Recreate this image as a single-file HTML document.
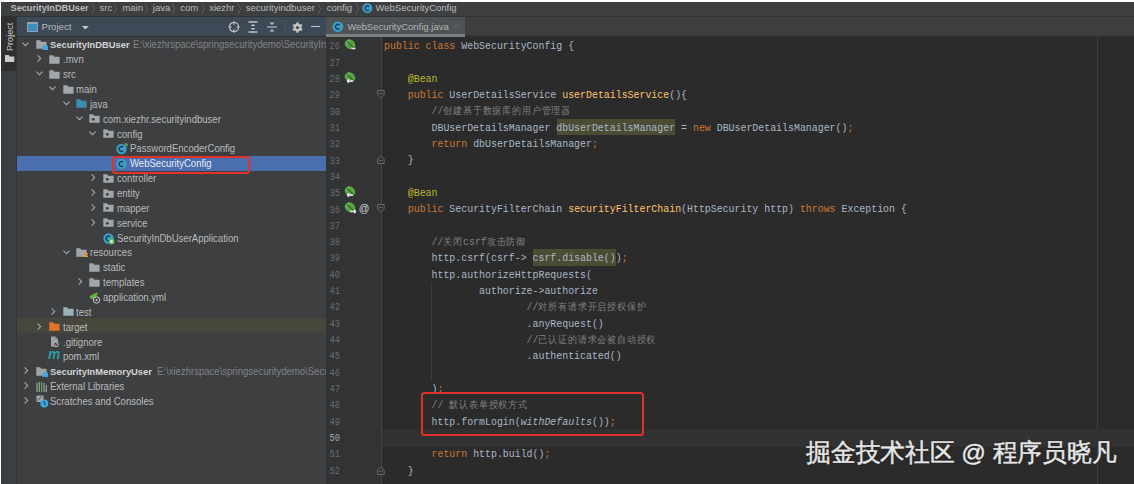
<!DOCTYPE html><html><head><meta charset="utf-8"><style>
*{margin:0;padding:0;box-sizing:border-box}
html,body{width:1134px;height:484px;overflow:hidden;background:#fff}
body{position:relative;font-family:"Liberation Sans",sans-serif}
.a{position:absolute}
.t{position:absolute;white-space:pre;font-size:9.5px;color:#bbbbbb;line-height:14px}
.tr{font-size:10px;transform-origin:0 50%;transform:scaleX(0.955)}
.code{position:absolute;white-space:pre;font-family:"Liberation Mono",monospace;font-size:11px;line-height:16px;color:#a9b7c6;transform-origin:0 0;transform:scaleX(0.9)}
.ln{position:absolute;white-space:pre;font-family:"Liberation Mono",monospace;font-size:10.4px;line-height:16px;color:#5c5f61;text-align:right;width:30px;transform-origin:100% 0;transform:scaleX(0.84)}
.kw{color:#cc7832}.fn{color:#ffc66d}.an{color:#bbb529}.cm{color:#808080}.it{font-style:italic}
.cj{font-size:10.2px;letter-spacing:0.9px}
</style></head><body>
<div class="a" style="left:1px;top:2px;width:1133px;height:14px;background:#3d3f41"></div>
<div class="a" style="left:1px;top:15.5px;width:1133px;height:1px;background:#2e3032"></div>
<div class="t" style="left:10.5px;top:0.5px;font-weight:bold;font-size:9.2px;color:#bbbbbb">SecurityInDBUser</div>
<div class="t" style="left:99.6px;top:0.5px;color:#bbbbbb">src</div>
<div class="t" style="left:122.4px;top:0.5px;color:#bbbbbb">main</div>
<div class="t" style="left:152.8px;top:0.5px;color:#bbbbbb">java</div>
<div class="t" style="left:180.3px;top:0.5px;color:#bbbbbb">com</div>
<div class="t" style="left:209.2px;top:0.5px;color:#bbbbbb">xiezhr</div>
<div class="t" style="left:245.7px;top:0.5px;color:#bbbbbb">securityindbuser</div>
<div class="t" style="left:326.8px;top:0.5px;color:#bbbbbb">config</div>
<div class="t" style="left:375.5px;top:0.5px;color:#bbbbbb">WebSecurityConfig</div>
<svg class="a" style="left:90.8px;top:3px" width="5" height="12"><path d="M1 0.5 L3.6 5.8 L1 11.2" stroke="#5f6265" stroke-width="0.9" fill="none"/></svg>
<svg class="a" style="left:113.4px;top:3px" width="5" height="12"><path d="M1 0.5 L3.6 5.8 L1 11.2" stroke="#5f6265" stroke-width="0.9" fill="none"/></svg>
<svg class="a" style="left:144.4px;top:3px" width="5" height="12"><path d="M1 0.5 L3.6 5.8 L1 11.2" stroke="#5f6265" stroke-width="0.9" fill="none"/></svg>
<svg class="a" style="left:171.2px;top:3px" width="5" height="12"><path d="M1 0.5 L3.6 5.8 L1 11.2" stroke="#5f6265" stroke-width="0.9" fill="none"/></svg>
<svg class="a" style="left:200.8px;top:3px" width="5" height="12"><path d="M1 0.5 L3.6 5.8 L1 11.2" stroke="#5f6265" stroke-width="0.9" fill="none"/></svg>
<svg class="a" style="left:236.8px;top:3px" width="5" height="12"><path d="M1 0.5 L3.6 5.8 L1 11.2" stroke="#5f6265" stroke-width="0.9" fill="none"/></svg>
<svg class="a" style="left:317px;top:3px" width="5" height="12"><path d="M1 0.5 L3.6 5.8 L1 11.2" stroke="#5f6265" stroke-width="0.9" fill="none"/></svg>
<svg class="a" style="left:354.6px;top:3px" width="5" height="12"><path d="M1 0.5 L3.6 5.8 L1 11.2" stroke="#5f6265" stroke-width="0.9" fill="none"/></svg>
<svg class="a" style="left:361.5px;top:3px" width="11" height="11"><circle cx="5.3" cy="5.3" r="5" fill="#3d9ec6"/><path d="M7 3.7A2.3 2.3 0 1 0 7 6.9" stroke="#173f5a" stroke-width="1.3" fill="none"/></svg>
<div class="a" style="left:1px;top:16px;width:15.5px;height:468px;background:#3c3f41"></div>
<div class="a" style="left:1px;top:16px;width:15.5px;height:55px;background:#2d2f31"></div>
<div class="a" style="left:16px;top:16px;width:1px;height:468px;background:#323436"></div>
<div class="a" style="left:3.6px;top:51.2px;transform-origin:0 0;transform:rotate(-90deg);font-size:9.1px;color:#c8c8c8;white-space:pre;line-height:12px">Project</div>
<svg class="a" style="left:5px;top:55.2px" width="10" height="8"><path d="M0 0 H3.8 L4.8 1.5 H9.3 V7 H0Z" fill="#c8c8c8"/></svg>
<div class="a" style="left:17px;top:16px;width:309px;height:468px;background:#3d3f41"></div>
<div class="a" style="left:17px;top:16px;width:309px;height:21px;background:#3e4957;border-top:1px solid #2f3337;border-bottom:1.3px solid #2e3236"></div>
<div class="a" style="left:26.8px;top:21.8px;width:11px;height:10px;border:1.1px solid #8fa2b1;border-top-width:2px;background:#3b8dbd"></div>
<div class="t" style="left:41.5px;top:19.5px;font-size:9.6px;color:#bbbbbb">Project</div>
<svg class="a" style="left:82.3px;top:25.8px" width="7" height="4"><path d="M0 0 H6.8 L3.4 3.5Z" fill="#c8c8c8"/></svg>
<svg class="a" style="left:228px;top:21px" width="12" height="12"><circle cx="6" cy="6" r="4.6" stroke="#c4c4c4" stroke-width="1.2" fill="none"/><path d="M6 0.6V3.8M6 8.2V11.4M0.6 6H3.8M8.2 6H11.4" stroke="#c4c4c4" stroke-width="1.2"/></svg>
<svg class="a" style="left:248px;top:21px" width="10" height="12"><path d="M0.5 1H9.5M0.5 11H9.5" stroke="#c4c4c4" stroke-width="1.3"/><path d="M2.5 5L5 3L7.5 5ZM2.5 7L5 9L7.5 7Z" fill="#c4c4c4"/></svg>
<svg class="a" style="left:267px;top:21px" width="10" height="12"><path d="M0 6H10" stroke="#c4c4c4" stroke-width="1.1"/><path d="M2.5 1.5L5 4L7.5 1.5ZM2.5 10.5L5 8L7.5 10.5Z" fill="#c4c4c4"/></svg>
<div class="a" style="left:285px;top:20px;width:1px;height:13px;background:#4a5562"></div>
<svg class="a" style="left:291.5px;top:21.5px" width="11" height="11"><g fill="#c4c4c4"><circle cx="5.5" cy="5.5" r="3.8"/><rect x="4.3" y="0.3" width="2.4" height="10.4" rx="0.6"/><rect x="4.3" y="0.3" width="2.4" height="10.4" rx="0.6" transform="rotate(60 5.5 5.5)"/><rect x="4.3" y="0.3" width="2.4" height="10.4" rx="0.6" transform="rotate(-60 5.5 5.5)"/></g><circle cx="5.5" cy="5.5" r="1.6" fill="#3e4957"/></svg>
<div class="a" style="left:311px;top:26px;width:9px;height:1.4px;background:#c4c4c4"></div>
<div class="a" style="left:17px;top:318.21px;width:309px;height:15px;background:#47463b"></div>
<div class="a" style="left:17px;top:155.70px;width:309.5px;height:14.9px;background:#4b6eaf"></div>
<svg class="a" style="left:22.4px;top:41.6px" width="7" height="5"><path d="M0.4 0.6L3.5 3.7L6.6 0.6" stroke="#a5a8aa" stroke-width="1.1" fill="none"/></svg>
<svg class="a" style="left:35.8px;top:40.0px" width="12" height="10"><path d="M0.3 0.3H4.2L5.2 1.7H10.6V8.8H0.3Z" fill="#a3a6a8"/><rect x="6.5" y="5.5" width="5.5" height="4.5" fill="#3fa7e0"/></svg>
<div class="t tr" style="left:49.5px;top:38.49px;font-weight:bold;font-size:9.8px;color:#d4d4d4">SecurityInDBUser</div>
<div class="t tr" style="left:132.6px;top:38.49px;color:#808386">E:\xiezhrspace\springsecuritydemo\SecurityInDBUser</div>
<svg class="a" style="left:37.3px;top:55.1px" width="5" height="7"><path d="M0.6 0.4L3.7 3.5L0.6 6.6" stroke="#a5a8aa" stroke-width="1.1" fill="none"/></svg>
<svg class="a" style="left:49.2px;top:54.8px" width="12" height="10"><path d="M0.3 0.3H4.2L5.2 1.7H10.6V8.8H0.3Z" fill="#a3a6a8"/></svg>
<div class="t tr" style="left:62.9px;top:53.35px;color:#bbbbbb">.mvn</div>
<svg class="a" style="left:35.8px;top:71.4px" width="7" height="5"><path d="M0.4 0.6L3.5 3.7L6.6 0.6" stroke="#a5a8aa" stroke-width="1.1" fill="none"/></svg>
<svg class="a" style="left:49.2px;top:69.7px" width="12" height="10"><path d="M0.3 0.3H4.2L5.2 1.7H10.6V8.8H0.3Z" fill="#a3a6a8"/></svg>
<div class="t tr" style="left:62.9px;top:68.20px;color:#bbbbbb">src</div>
<svg class="a" style="left:49.2px;top:86.2px" width="7" height="5"><path d="M0.4 0.6L3.5 3.7L6.6 0.6" stroke="#a5a8aa" stroke-width="1.1" fill="none"/></svg>
<svg class="a" style="left:62.6px;top:84.5px" width="12" height="10"><path d="M0.3 0.3H4.2L5.2 1.7H10.6V8.8H0.3Z" fill="#a3a6a8"/></svg>
<div class="t tr" style="left:76.3px;top:83.06px;color:#bbbbbb">main</div>
<svg class="a" style="left:62.6px;top:101.1px" width="7" height="5"><path d="M0.4 0.6L3.5 3.7L6.6 0.6" stroke="#a5a8aa" stroke-width="1.1" fill="none"/></svg>
<svg class="a" style="left:76.0px;top:99.4px" width="12" height="10"><path d="M0.3 0.3H4.2L5.2 1.7H10.6V8.8H0.3Z" fill="#3a8fb0"/></svg>
<div class="t tr" style="left:89.7px;top:97.91px;color:#bbbbbb">java</div>
<svg class="a" style="left:76.0px;top:115.9px" width="7" height="5"><path d="M0.4 0.6L3.5 3.7L6.6 0.6" stroke="#a5a8aa" stroke-width="1.1" fill="none"/></svg>
<svg class="a" style="left:89.4px;top:114.2px" width="12" height="10"><path d="M0.3 0.3H4.2L5.2 1.7H10.6V8.8H0.3Z" fill="#a3a6a8"/><circle cx="4.3" cy="5.3" r="1.4" fill="#3c3f41"/></svg>
<div class="t tr" style="left:103.1px;top:112.77px;color:#bbbbbb">com.xiezhr.securityindbuser</div>
<svg class="a" style="left:89.4px;top:130.8px" width="7" height="5"><path d="M0.4 0.6L3.5 3.7L6.6 0.6" stroke="#a5a8aa" stroke-width="1.1" fill="none"/></svg>
<svg class="a" style="left:102.8px;top:129.1px" width="12" height="10"><path d="M0.3 0.3H4.2L5.2 1.7H10.6V8.8H0.3Z" fill="#a3a6a8"/><circle cx="4.3" cy="5.3" r="1.4" fill="#3c3f41"/></svg>
<div class="t tr" style="left:116.5px;top:127.63px;color:#bbbbbb">config</div>
<svg class="a" style="left:116.2px;top:143.3px" width="12" height="12"><circle cx="5.5" cy="6" r="5.2" fill="#3d9ec6"/><path d="M7.3 4.3A2.4 2.4 0 1 0 7.3 7.7" stroke="#173f5a" stroke-width="1.4" fill="none"/><path d="M8 0.5 L11.5 0.5 L11.5 4Z" fill="#5fb85a"/></svg>
<div class="t tr" style="left:129.9px;top:142.48px;color:#bbbbbb">PasswordEncoderConfig</div>
<svg class="a" style="left:116.2px;top:158.2px" width="12" height="12"><circle cx="5.5" cy="6" r="5.2" fill="#3d9ec6"/><path d="M7.3 4.3A2.4 2.4 0 1 0 7.3 7.7" stroke="#173f5a" stroke-width="1.4" fill="none"/></svg>
<div class="t tr" style="left:129.9px;top:157.34px;color:#e4eaf4">WebSecurityConfig</div>
<svg class="a" style="left:90.9px;top:174.0px" width="5" height="7"><path d="M0.6 0.4L3.7 3.5L0.6 6.6" stroke="#a5a8aa" stroke-width="1.1" fill="none"/></svg>
<svg class="a" style="left:102.8px;top:173.7px" width="12" height="10"><path d="M0.3 0.3H4.2L5.2 1.7H10.6V8.8H0.3Z" fill="#a3a6a8"/><circle cx="4.3" cy="5.3" r="1.4" fill="#3c3f41"/></svg>
<div class="t tr" style="left:116.5px;top:172.19px;color:#bbbbbb">controller</div>
<svg class="a" style="left:90.9px;top:188.8px" width="5" height="7"><path d="M0.6 0.4L3.7 3.5L0.6 6.6" stroke="#a5a8aa" stroke-width="1.1" fill="none"/></svg>
<svg class="a" style="left:102.8px;top:188.5px" width="12" height="10"><path d="M0.3 0.3H4.2L5.2 1.7H10.6V8.8H0.3Z" fill="#a3a6a8"/><circle cx="4.3" cy="5.3" r="1.4" fill="#3c3f41"/></svg>
<div class="t tr" style="left:116.5px;top:187.05px;color:#bbbbbb">entity</div>
<svg class="a" style="left:90.9px;top:203.7px" width="5" height="7"><path d="M0.6 0.4L3.7 3.5L0.6 6.6" stroke="#a5a8aa" stroke-width="1.1" fill="none"/></svg>
<svg class="a" style="left:102.8px;top:203.4px" width="12" height="10"><path d="M0.3 0.3H4.2L5.2 1.7H10.6V8.8H0.3Z" fill="#a3a6a8"/><circle cx="4.3" cy="5.3" r="1.4" fill="#3c3f41"/></svg>
<div class="t tr" style="left:116.5px;top:201.91px;color:#bbbbbb">mapper</div>
<svg class="a" style="left:90.9px;top:218.5px" width="5" height="7"><path d="M0.6 0.4L3.7 3.5L0.6 6.6" stroke="#a5a8aa" stroke-width="1.1" fill="none"/></svg>
<svg class="a" style="left:102.8px;top:218.2px" width="12" height="10"><path d="M0.3 0.3H4.2L5.2 1.7H10.6V8.8H0.3Z" fill="#a3a6a8"/><circle cx="4.3" cy="5.3" r="1.4" fill="#3c3f41"/></svg>
<div class="t tr" style="left:116.5px;top:216.76px;color:#bbbbbb">service</div>
<svg class="a" style="left:102.8px;top:232.5px" width="12" height="12"><circle cx="5.5" cy="5.5" r="5.2" fill="#3d9ec6"/><path d="M7.3 3.8A2.4 2.4 0 1 0 7.3 7.2" stroke="#173f5a" stroke-width="1.4" fill="none"/><circle cx="8.5" cy="8.5" r="3" fill="#5fb85a"/><circle cx="8.5" cy="8.5" r="1.4" fill="#e8e8e8"/></svg>
<div class="t tr" style="left:116.5px;top:231.62px;color:#bbbbbb">SecurityInDbUserApplication</div>
<svg class="a" style="left:62.6px;top:249.6px" width="7" height="5"><path d="M0.4 0.6L3.5 3.7L6.6 0.6" stroke="#a5a8aa" stroke-width="1.1" fill="none"/></svg>
<svg class="a" style="left:76.0px;top:247.9px" width="12" height="10"><path d="M0.3 0.3H4.2L5.2 1.7H10.6V8.8H0.3Z" fill="#a3a6a8"/><rect x="7" y="5" width="5" height="1.5" fill="#d9a13b"/><rect x="7" y="7.5" width="5" height="1.5" fill="#d9a13b"/></svg>
<div class="t tr" style="left:89.7px;top:246.47px;color:#bbbbbb">resources</div>
<svg class="a" style="left:89.4px;top:262.8px" width="12" height="10"><path d="M0.3 0.3H4.2L5.2 1.7H10.6V8.8H0.3Z" fill="#a3a6a8"/></svg>
<div class="t tr" style="left:103.1px;top:261.33px;color:#bbbbbb">static</div>
<svg class="a" style="left:77.5px;top:277.9px" width="5" height="7"><path d="M0.6 0.4L3.7 3.5L0.6 6.6" stroke="#a5a8aa" stroke-width="1.1" fill="none"/></svg>
<svg class="a" style="left:89.4px;top:277.6px" width="12" height="10"><path d="M0.3 0.3H4.2L5.2 1.7H10.6V8.8H0.3Z" fill="#a3a6a8"/></svg>
<div class="t tr" style="left:103.1px;top:276.19px;color:#bbbbbb">templates</div>
<svg class="a" style="left:89.4px;top:291.9px" width="12" height="12"><path d="M0.5 5 Q3 2 9 0.5 Q8 6 2 7Z" fill="#62b543"/><circle cx="7.5" cy="8" r="3.2" fill="#3c3f41" stroke="#d0d0d0" stroke-width="1"/><circle cx="7.5" cy="8" r="1" fill="#d0d0d0"/></svg>
<div class="t tr" style="left:103.1px;top:291.04px;color:#bbbbbb">application.yml</div>
<svg class="a" style="left:50.7px;top:307.7px" width="5" height="7"><path d="M0.6 0.4L3.7 3.5L0.6 6.6" stroke="#a5a8aa" stroke-width="1.1" fill="none"/></svg>
<svg class="a" style="left:62.6px;top:307.4px" width="12" height="10"><path d="M0.3 0.3H4.2L5.2 1.7H10.6V8.8H0.3Z" fill="#9cb0b8"/></svg>
<div class="t tr" style="left:76.3px;top:305.90px;color:#bbbbbb">test</div>
<svg class="a" style="left:37.3px;top:322.5px" width="5" height="7"><path d="M0.6 0.4L3.7 3.5L0.6 6.6" stroke="#a5a8aa" stroke-width="1.1" fill="none"/></svg>
<svg class="a" style="left:49.2px;top:322.2px" width="12" height="10"><path d="M0.3 0.3H4.2L5.2 1.7H10.6V8.8H0.3Z" fill="#e0702a"/></svg>
<div class="t tr" style="left:62.9px;top:320.75px;color:#bbbbbb">target</div>
<svg class="a" style="left:49.7px;top:335.5px" width="11" height="12"><path d="M1 0.5H5.5L8 3V10.5H1Z" fill="#a0a3a5"/><path d="M5.5 0.5V3H8" fill="#6d7072"/><circle cx="6" cy="8.3" r="2.4" fill="#3c3f41" stroke="#c4c4c4" stroke-width="0.9"/><path d="M4.5 9.8L7.5 6.8" stroke="#c4c4c4" stroke-width="0.8"/></svg>
<div class="t tr" style="left:62.9px;top:335.61px;color:#bbbbbb">.gitignore</div>
<div class="a" style="left:47.7px;top:346.3px;font-size:15px;font-style:italic;font-weight:bold;color:#3399a6;line-height:16px;transform-origin:0 50%;transform:scaleX(0.92)">m</div>
<div class="t tr" style="left:62.9px;top:350.47px;color:#bbbbbb">pom.xml</div>
<svg class="a" style="left:23.9px;top:367.1px" width="5" height="7"><path d="M0.6 0.4L3.7 3.5L0.6 6.6" stroke="#a5a8aa" stroke-width="1.1" fill="none"/></svg>
<svg class="a" style="left:35.8px;top:366.8px" width="12" height="10"><path d="M0.3 0.3H4.2L5.2 1.7H10.6V8.8H0.3Z" fill="#a3a6a8"/><rect x="6.5" y="5.5" width="5.5" height="4.5" fill="#3fa7e0"/></svg>
<div class="t tr" style="left:49.5px;top:365.32px;font-weight:bold;font-size:9.8px;color:#d4d4d4">SecurityInMemoryUser</div>
<div class="t tr" style="left:157.2px;top:365.32px;color:#808386">E:\xiezhrspace\springsecuritydemo\SecurityInMemoryUser</div>
<svg class="a" style="left:23.9px;top:381.9px" width="5" height="7"><path d="M0.6 0.4L3.7 3.5L0.6 6.6" stroke="#a5a8aa" stroke-width="1.1" fill="none"/></svg>
<svg class="a" style="left:35.8px;top:381.5px" width="12" height="10"><path d="M1 1V10M3.3 0V10M8 1V10M10.3 3V10" stroke="#a9acae" stroke-width="1.1"/><path d="M5.6 0V10" stroke="#62b543" stroke-width="1.1"/></svg>
<div class="t tr" style="left:49.5px;top:380.18px;color:#bbbbbb">External Libraries</div>
<svg class="a" style="left:23.9px;top:396.8px" width="5" height="7"><path d="M0.6 0.4L3.7 3.5L0.6 6.6" stroke="#a5a8aa" stroke-width="1.1" fill="none"/></svg>
<svg class="a" style="left:35.8px;top:394.9px" width="13" height="13"><path d="M0.5 0.5H7.5V7H0.5Z" fill="#a3a6a8"/><path d="M1.5 5.5L5.5 1.5" stroke="#3c3f41" stroke-width="0.9"/><circle cx="8.3" cy="8.5" r="4" fill="#3fa7e0"/><path d="M8.3 6V8.7L10 9.8" stroke="#1e3d50" stroke-width="1" fill="none"/></svg>
<div class="t tr" style="left:49.5px;top:395.03px;color:#bbbbbb">Scratches and Consoles</div>
<div class="a" style="left:111.8px;top:155.8px;width:138.4px;height:18.6px;border:2.9px solid #e2302a;border-radius:3.5px"></div>
<div class="a" style="left:326.5px;top:16px;width:808px;height:20.5px;background:#3d3f41;border-top:1px solid #2f3133"></div>
<div class="a" style="left:326.5px;top:35.2px;width:808px;height:1.4px;background:#323435"></div>
<div class="a" style="left:326px;top:17px;width:139.2px;height:19.8px;background:#4e5254"></div>
<div class="a" style="left:326px;top:33.8px;width:139.2px;height:3px;background:#7b7f81"></div>
<svg class="a" style="left:332px;top:21px" width="12" height="12"><circle cx="5.8" cy="5.8" r="5.4" fill="#3d9ec6"/><path d="M7.6 4.1A2.4 2.4 0 1 0 7.6 7.5" stroke="#173f5a" stroke-width="1.4" fill="none"/></svg>
<div class="t" style="left:347.5px;top:19.7px;color:#b0b2b4">WebSecurityConfig.java</div>
<svg class="a" style="left:452.7px;top:23.3px" width="7" height="6"><path d="M0.5 0.5L6.5 5.5M6.5 0.5L0.5 5.5" stroke="#6a6d6f" stroke-width="0.9"/></svg>
<div class="a" style="left:326px;top:36.5px;width:55.5px;height:448px;background:#313335"></div>
<div class="a" style="left:381.5px;top:36.5px;width:753px;height:448px;background:#2b2b2b"></div>
<div class="a" style="left:380.5px;top:36.5px;width:0.8px;height:448px;background:#414345"></div>
<div class="a" style="left:1097px;top:36.5px;width:1px;height:448px;background:#3d3f41"></div>
<div class="a" style="left:381.5px;top:429.32px;width:753px;height:17.6px;background:#323232"></div>
<div class="a" style="left:556.6px;top:118.75px;width:118.8px;height:16.6px;background:#4a4d33"></div>
<div class="a" style="left:532.8px;top:249.39px;width:83.2px;height:16.6px;background:#4a4d33"></div>
<div class="a" style="left:430.8px;top:282.05px;width:1px;height:97.98px;background:#3b3b3b"></div>
<div class="ln" style="left:310.2px;top:38.20px;color:#6a6d6f">26</div>
<div class="code" style="left:384.3px;top:38.00px"><span class="kw">public class </span>WebSecurityConfig {</div>
<div class="ln" style="left:310.2px;top:54.53px;color:#6a6d6f">27</div>
<div class="ln" style="left:310.2px;top:70.86px;color:#6a6d6f">28</div>
<div class="code" style="left:384.3px;top:70.66px">    <span class="an">@Bean</span></div>
<div class="ln" style="left:310.2px;top:87.19px;color:#6a6d6f">29</div>
<div class="code" style="left:384.3px;top:86.99px">    <span class="kw">public </span>UserDetailsService <span class="fn">userDetailsService</span>(){</div>
<div class="ln" style="left:310.2px;top:103.52px;color:#6a6d6f">30</div>
<div class="code" style="left:384.3px;top:103.32px">        <span class="cm">//<span class="cj">创建基于数据库的用户管理器</span></span></div>
<div class="ln" style="left:310.2px;top:119.85px;color:#6a6d6f">31</div>
<div class="code" style="left:384.3px;top:119.65px">        DBUserDetailsManager dbUserDetailsManager = <span class="kw">new </span>DBUserDetailsManager()<span class="kw">;</span></div>
<div class="ln" style="left:310.2px;top:136.18px;color:#6a6d6f">32</div>
<div class="code" style="left:384.3px;top:135.98px">        <span class="kw">return </span>dbUserDetailsManager<span class="kw">;</span></div>
<div class="ln" style="left:310.2px;top:152.51px;color:#6a6d6f">33</div>
<div class="code" style="left:384.3px;top:152.31px">    }</div>
<div class="ln" style="left:310.2px;top:168.84px;color:#6a6d6f">34</div>
<div class="ln" style="left:310.2px;top:185.17px;color:#6a6d6f">35</div>
<div class="code" style="left:384.3px;top:184.97px">    <span class="an">@Bean</span></div>
<div class="ln" style="left:310.2px;top:201.50px;color:#6a6d6f">36</div>
<div class="code" style="left:384.3px;top:201.30px">    <span class="kw">public </span>SecurityFilterChain <span class="fn">securityFilterChain</span>(HttpSecurity http) <span class="kw">throws </span>Exception {</div>
<div class="ln" style="left:310.2px;top:217.83px;color:#6a6d6f">37</div>
<div class="ln" style="left:310.2px;top:234.16px;color:#6a6d6f">38</div>
<div class="code" style="left:384.3px;top:233.96px">        <span class="cm">//<span class="cj">关闭</span>csrf<span class="cj">攻击防御</span></span></div>
<div class="ln" style="left:310.2px;top:250.49px;color:#6a6d6f">39</div>
<div class="code" style="left:384.3px;top:250.29px">        http.csrf(csrf-> csrf.disable())<span class="kw">;</span></div>
<div class="ln" style="left:310.2px;top:266.82px;color:#6a6d6f">40</div>
<div class="code" style="left:384.3px;top:266.62px">        http.authorizeHttpRequests(</div>
<div class="ln" style="left:310.2px;top:283.15px;color:#6a6d6f">41</div>
<div class="code" style="left:384.3px;top:282.95px">                authorize->authorize</div>
<div class="ln" style="left:310.2px;top:299.48px;color:#6a6d6f">42</div>
<div class="code" style="left:384.3px;top:299.28px">                        <span class="cm">//<span class="cj">对所有请求开启授权保护</span></span></div>
<div class="ln" style="left:310.2px;top:315.81px;color:#6a6d6f">43</div>
<div class="code" style="left:384.3px;top:315.61px">                        .anyRequest()</div>
<div class="ln" style="left:310.2px;top:332.14px;color:#6a6d6f">44</div>
<div class="code" style="left:384.3px;top:331.94px">                        <span class="cm">//<span class="cj">已认证的请求会被自动授权</span></span></div>
<div class="ln" style="left:310.2px;top:348.47px;color:#6a6d6f">45</div>
<div class="code" style="left:384.3px;top:348.27px">                        .authenticated()</div>
<div class="ln" style="left:310.2px;top:364.80px;color:#6a6d6f">46</div>
<div class="ln" style="left:310.2px;top:381.13px;color:#6a6d6f">47</div>
<div class="code" style="left:384.3px;top:380.93px">        )<span class="kw">;</span></div>
<div class="ln" style="left:310.2px;top:397.46px;color:#6a6d6f">48</div>
<div class="code" style="left:384.3px;top:397.26px">        <span class="cm">// <span class="cj">默认表单授权方式</span></span></div>
<div class="ln" style="left:310.2px;top:413.79px;color:#6a6d6f">49</div>
<div class="code" style="left:384.3px;top:413.59px">        http.formLogin(<span class="it">withDefaults</span>())<span class="kw">;</span></div>
<div class="ln" style="left:310.2px;top:430.12px;color:#a8a8a8">50</div>
<div class="ln" style="left:310.2px;top:446.45px;color:#6a6d6f">51</div>
<div class="code" style="left:384.3px;top:446.25px">        <span class="kw">return </span>http.build()<span class="kw">;</span></div>
<div class="ln" style="left:310.2px;top:462.78px;color:#6a6d6f">52</div>
<div class="code" style="left:384.3px;top:462.58px">    }</div>
<svg class="a" style="left:376.8px;top:90.1px" width="8" height="9"><path d="M0.5 0.5H7.2V5L3.85 8.2L0.5 5Z" stroke="#6b6d6f" stroke-width="0.9" fill="#313335"/><path d="M2 3.6H5.7" stroke="#6b6d6f" stroke-width="0.9"/></svg>
<svg class="a" style="left:376.8px;top:155.4px" width="8" height="9"><path d="M0.5 8.5H7.2V4L3.85 0.8L0.5 4Z" stroke="#6b6d6f" stroke-width="0.9" fill="#313335"/><path d="M2 5.4H5.7" stroke="#6b6d6f" stroke-width="0.9"/></svg>
<svg class="a" style="left:376.8px;top:204.4px" width="8" height="9"><path d="M0.5 0.5H7.2V5L3.85 8.2L0.5 5Z" stroke="#6b6d6f" stroke-width="0.9" fill="#313335"/><path d="M2 3.6H5.7" stroke="#6b6d6f" stroke-width="0.9"/></svg>
<svg class="a" style="left:376.8px;top:465.7px" width="8" height="9"><path d="M0.5 8.5H7.2V4L3.85 0.8L0.5 4Z" stroke="#6b6d6f" stroke-width="0.9" fill="#313335"/><path d="M2 5.4H5.7" stroke="#6b6d6f" stroke-width="0.9"/></svg>
<svg class="a" style="left:344px;top:38.1px" width="13" height="13"><ellipse cx="6" cy="6.3" rx="5.6" ry="4.6" fill="#5aa447" transform="rotate(35 6 6.3)"/><path d="M2.3 2.6 L9.6 9.6" stroke="#2a5e22" stroke-width="1.2"/><path d="M2 5.5 Q3.5 3 6 2" stroke="#88c970" stroke-width="0.8" fill="none"/><path d="M7.5 10.5H11.5" stroke="#e8e8e8" stroke-width="1.5"/></svg>
<svg class="a" style="left:344px;top:70.8px" width="13" height="13"><ellipse cx="6" cy="6.3" rx="5.6" ry="4.6" fill="#5aa447" transform="rotate(35 6 6.3)"/><path d="M2.3 2.6 L9.6 9.6" stroke="#2a5e22" stroke-width="1.2"/><path d="M2 5.5 Q3.5 3 6 2" stroke="#88c970" stroke-width="0.8" fill="none"/><path d="M3 10H9M3 10L5 8.3M3 10L5 11.7" stroke="#e8e8e8" stroke-width="1.3" fill="none"/></svg>
<svg class="a" style="left:344px;top:185.1px" width="13" height="13"><ellipse cx="6" cy="6.3" rx="5.6" ry="4.6" fill="#5aa447" transform="rotate(35 6 6.3)"/><path d="M2.3 2.6 L9.6 9.6" stroke="#2a5e22" stroke-width="1.2"/><path d="M2 5.5 Q3.5 3 6 2" stroke="#88c970" stroke-width="0.8" fill="none"/><path d="M3 10H9M3 10L5 8.3M3 10L5 11.7" stroke="#e8e8e8" stroke-width="1.3" fill="none"/></svg>
<svg class="a" style="left:344px;top:201.4px" width="13" height="13"><ellipse cx="6" cy="6.3" rx="5.6" ry="4.6" fill="#5aa447" transform="rotate(35 6 6.3)"/><path d="M2.3 2.6 L9.6 9.6" stroke="#2a5e22" stroke-width="1.2"/><path d="M2 5.5 Q3.5 3 6 2" stroke="#88c970" stroke-width="0.8" fill="none"/><path d="M6 10.5H12M12 10.5L10 8.8M12 10.5L10 12.2" stroke="#e8e8e8" stroke-width="1.3" fill="none"/></svg>
<div class="a" style="left:358.8px;top:201.9px;font-size:10.5px;color:#d8d8d8;line-height:13px">@</div>
<div class="a" style="left:421px;top:391.5px;width:223.2px;height:44.6px;border:2.9px solid #e2302a;border-radius:3.5px"></div>
<div class="a" style="left:806.4px;top:435.6px;font-size:24.5px;-webkit-text-stroke:0.45px #e6e6e6;transform-origin:0 0;transform:scaleX(0.99);line-height:34px;color:#e6e6e6;white-space:pre;text-shadow:0 0 2px rgba(0,0,0,0.6)">掘金技术社区 @ 程序员晓凡</div>
</body></html>
